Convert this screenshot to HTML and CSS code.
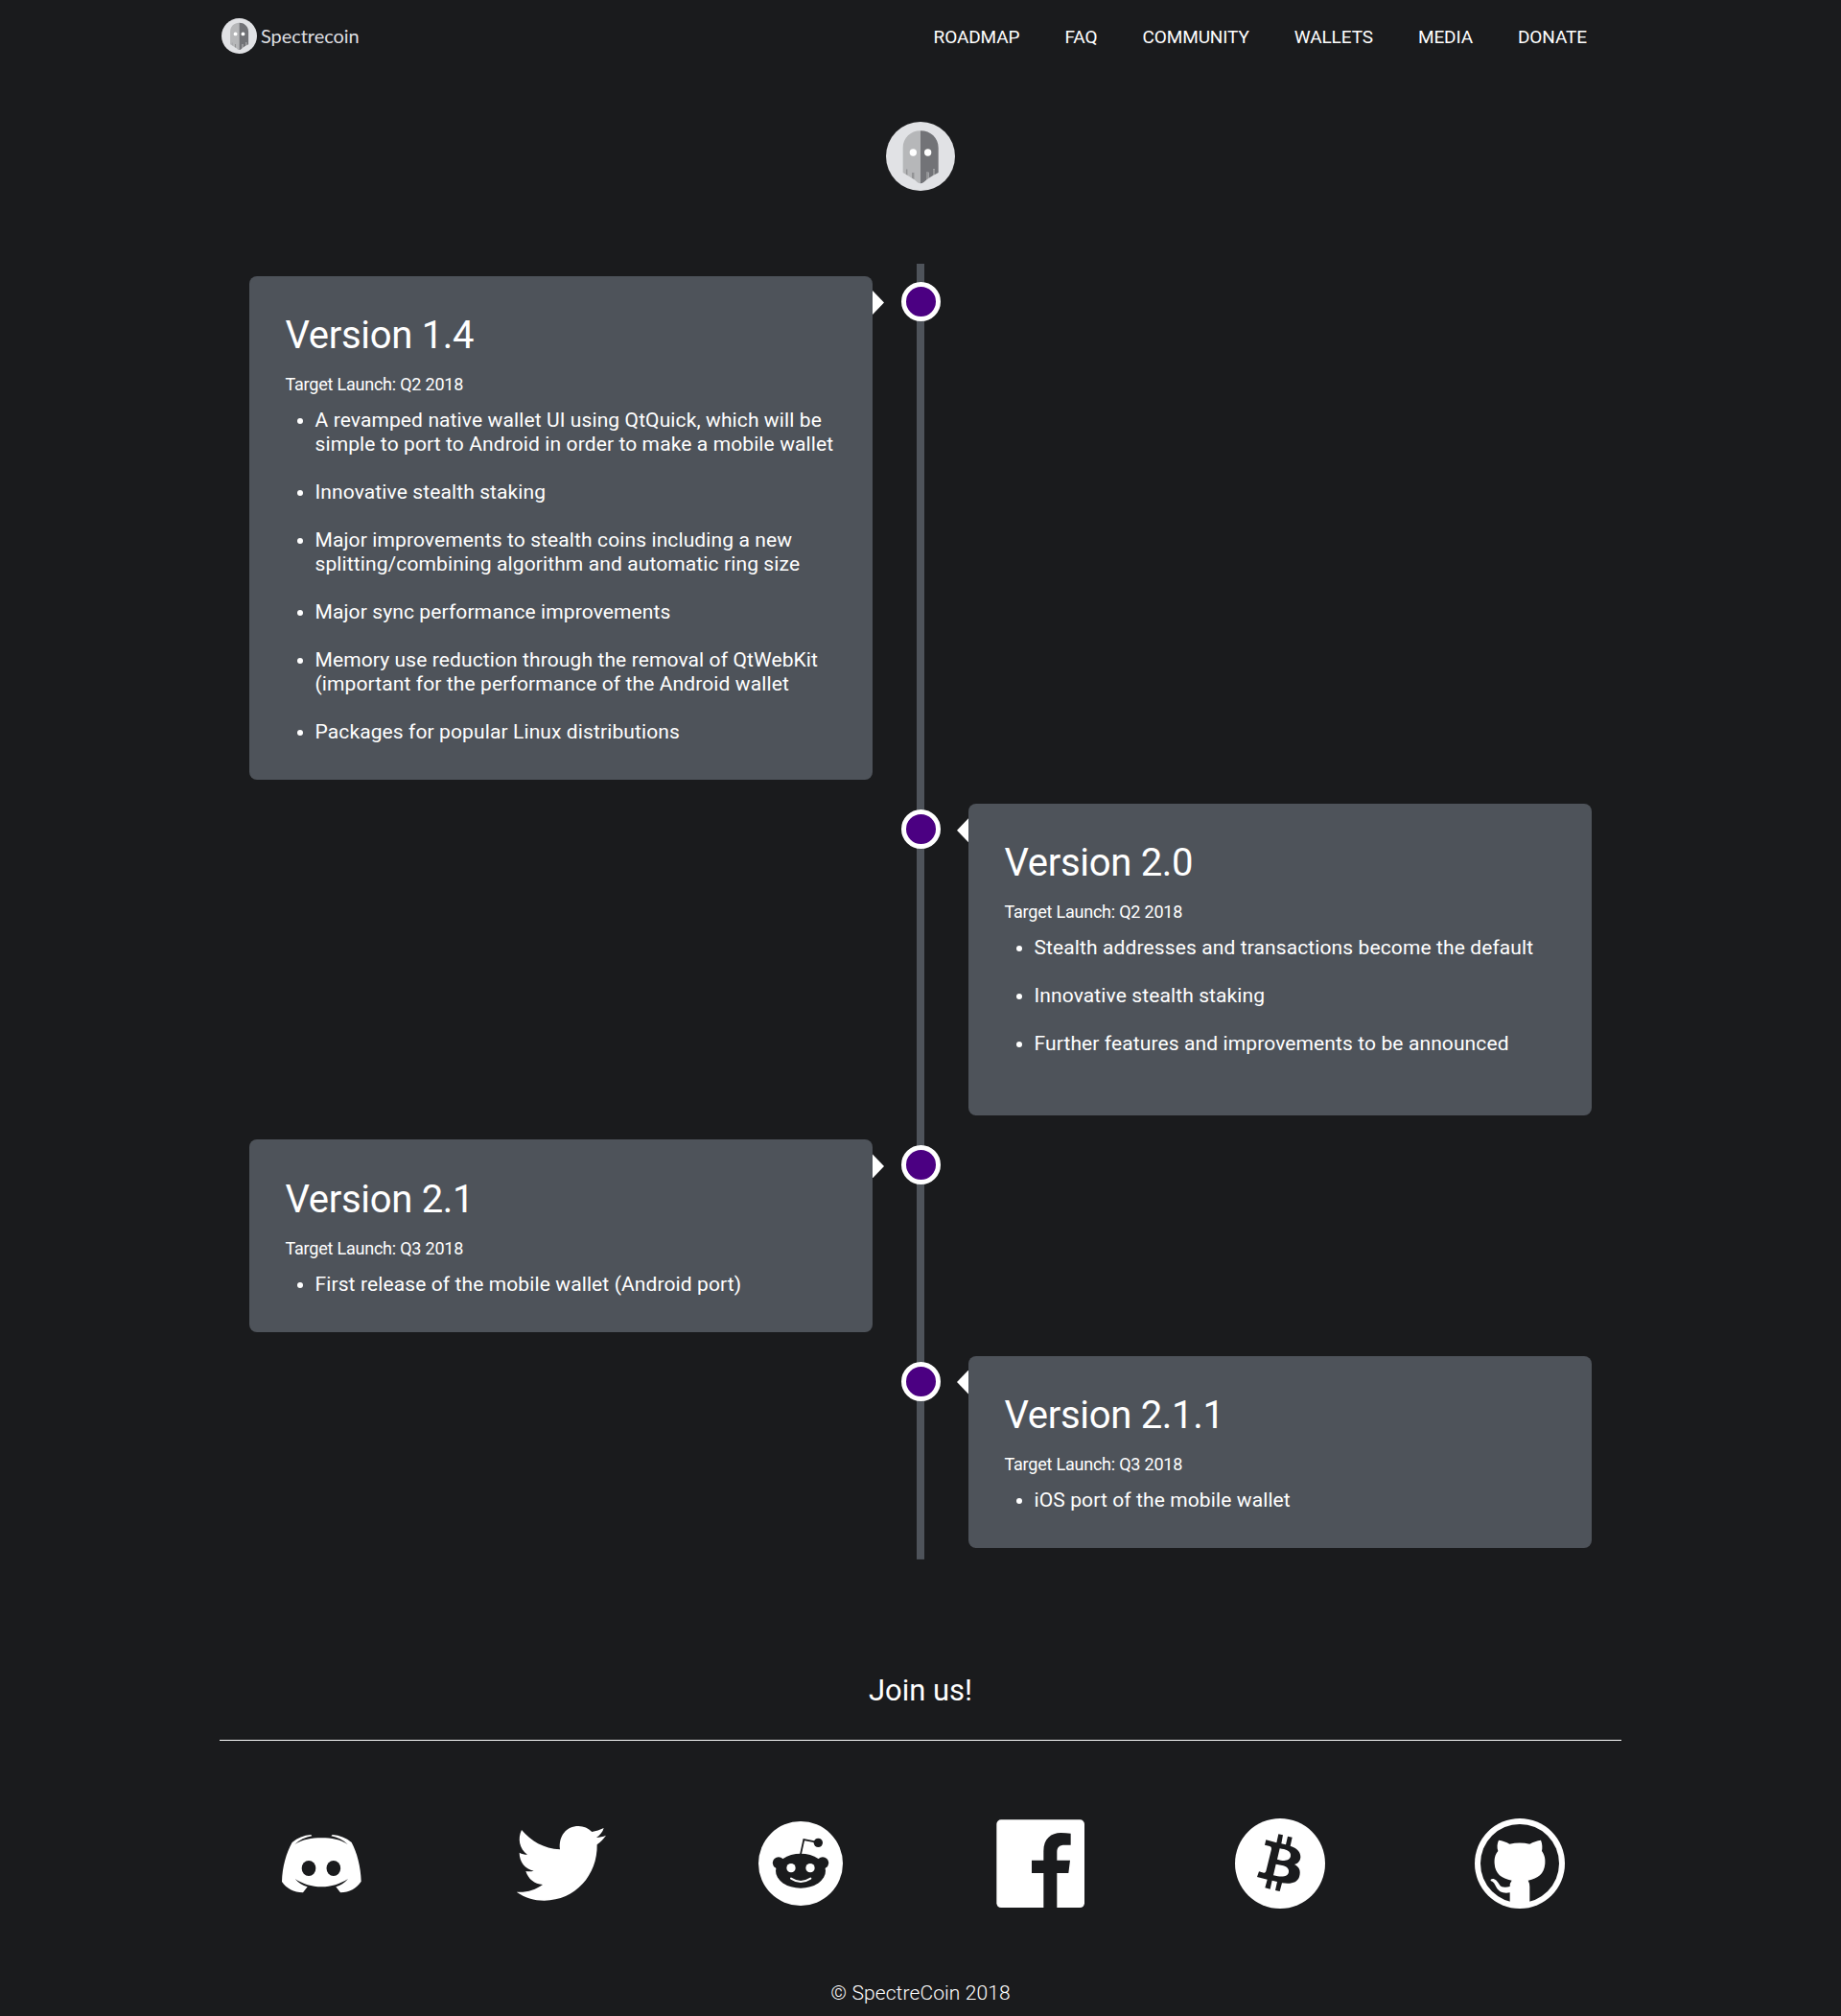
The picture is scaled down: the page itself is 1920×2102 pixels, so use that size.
FILE: index.html
```html
<!DOCTYPE html>
<html lang="en">
<head>
<meta charset="utf-8">
<title>Spectrecoin Roadmap</title>
<link rel="stylesheet" href="styles.css">
</head>
<body>
<svg class="defs" aria-hidden="true">
  <symbol id="ghost" viewBox="72 50 216 216">
    <circle cx="180" cy="158" r="108" fill="#e1e2e5"/>
    <path d="M180 78C149 78 125 101 125 131V209L134 214V198H140V218L153 226V208H161V231L170 239Q175 243 180 243Z" fill="#b6b7b9"/>
    <path d="M180 78C212 78 236 101 236 131V209L225 215V198H219V218L206 226V208H198V232L190 239Q185 243 180 243Z" fill="#727377"/>
    <path d="M134 198h6v20l-6-4zM153 208h8v23l-8-5zM198 208h8v18l-8 6zM219 198h6v17l-6 3z" fill="#939496"/>
    <circle cx="157" cy="146" r="11" fill="#fff"/><circle cx="203" cy="146" r="11" fill="#fff"/>
  </symbol>
</svg>
<header class="header">
  <a class="brand"><svg class="brand-icon"><use href="#ghost"/></svg><span class="brand-name">Spectrecoin</span></a>
  <nav class="nav"><a>ROADMAP</a><a>FAQ</a><a>COMMUNITY</a><a>WALLETS</a><a>MEDIA</a><a>DONATE</a></nav>
</header>
<main>
  <svg class="emblem"><use href="#ghost"/></svg>
  <section class="timeline">
    <article class="card left">
      <h2>Version 1.4</h2>
      <p>Target Launch: Q2 2018</p>
      <ul>
        <li>A revamped native wallet UI using QtQuick, which will be<br>simple to port to Android in order to make a mobile wallet</li>
        <li>Innovative stealth staking</li>
        <li>Major improvements to stealth coins including a new<br>splitting/combining algorithm and automatic ring size</li>
        <li>Major sync performance improvements</li>
        <li>Memory use reduction through the removal of QtWebKit<br>(important for the performance of the Android wallet</li>
        <li>Packages for popular Linux distributions</li>
      </ul>
    </article>
    <article class="card right roomy">
      <h2>Version 2.0</h2>
      <p>Target Launch: Q2 2018</p>
      <ul>
        <li>Stealth addresses and transactions become the default</li>
        <li>Innovative stealth staking</li>
        <li>Further features and improvements to be announced</li>
      </ul>
    </article>
    <article class="card left">
      <h2>Version 2.1</h2>
      <p>Target Launch: Q3 2018</p>
      <ul><li>First release of the mobile wallet (Android port)</li></ul>
    </article>
    <article class="card right">
      <h2>Version 2.1.1</h2>
      <p>Target Launch: Q3 2018</p>
      <ul><li>iOS port of the mobile wallet</li></ul>
    </article>
  </section>
</main>
<footer class="footer">
  <h3>Join us!</h3>
  <div class="social">
    <svg viewBox="54 48 282 282"><path fill="#fff" d="M104 123C121 109 140 101 163 99L166 103C145 107 128 115 112 129C137 114 164 109 196 109C228 109 254 114 278 129C263 115 245 107 226 103L230 99C253 101 273 109 290 123C307 155 319 200 320 245C306 267 283 279 255 280L241 262C256 257 267 250 279 237C253 253 227 262 196 262C165 262 138 253 113 237C125 250 136 257 152 262L138 280C109 279 86 267 72 246C73 200 86 155 104 123Z"/><ellipse cx="156" cy="204" rx="22" ry="24" class="cut"/><ellipse cx="233.500" cy="204" rx="22" ry="24" class="cut"/></svg>
    <svg viewBox="804 48 282 282"><path fill="#fff" d="M822 84C850 118 892 143 942 145C937 103 962 72 1000 72C1016 72 1031 78 1042 90C1055 88 1067 84 1079 78C1076 90 1067 101 1056 108C1066 107 1076 105 1086 101C1078 113 1069 121 1058 130C1060 225 990 305 893 305C861 305 832 296 806 278C838 280 865 272 888 255C862 253 843 238 835 213C844 215 852 214 860 212C833 206 815 184 815 155C823 159 831 161 840 161C815 143 809 111 822 84Z"/></svg>
    <svg viewBox="54 48 282 282"><circle cx="195" cy="189" r="132" fill="#fff"/><g class="cut"><circle cx="126" cy="187" r="18.500"/><circle cx="264" cy="187" r="18.500"/><ellipse cx="195" cy="212" rx="78" ry="54"/><circle cx="250" cy="124" r="14"/></g><path class="cut-line" stroke-width="5.500" d="M195 160L205 114L244 122"/><circle cx="165" cy="203" r="14" fill="#fff"/><circle cx="225" cy="203" r="14" fill="#fff"/><path d="M165 236Q195 256 226 236" stroke="#fff" stroke-width="6" stroke-linecap="round" fill="none"/></svg>
    <svg viewBox="804 48 282 282"><rect x="808" y="52" width="275" height="275" rx="14" fill="#fff"/><path class="cut" d="M955 328V219H918V179H955V150C955 111 979 93 1009 93Q1025 93 1040 95V131H1022C1003 131 997 139 997 154V179H1038L1033 219H997V328Z"/></svg>
    <svg viewBox="54 48 282 282"><circle cx="195" cy="189" r="141" fill="#fff"/><path class="cut" fill-rule="evenodd" d="M151 115L184 124L190 97L204 100L199 127L213 130L219 104L233 107L227 134C248 141 260 153 259 169C258 182 251 189 240 192C255 199 261 213 255 231C248 249 231 254 201 250L194 276L180 273L186 246L170 242L164 269L148 265L155 239L123 231L129 214L144 218Q149 219 151 213L168 144Q169 137 163 135L147 131ZM194 142L186 176C208 183 226 181 228 166C230 149 212 145 194 142ZM182 191L174 226C199 232 219 232 222 216C225 198 204 194 182 191Z"/></svg>
    <svg viewBox="804 48 282 282"><circle cx="945" cy="189" r="141" fill="#fff"/><circle cx="945" cy="189" r="123" class="cut"/><path fill="#fff" d="M879 116C891 117 903 122 913 128Q945 121 976 128C987 122 999 117 1011 116C1016 128 1016 140 1014 150C1024 164 1025 177 1024 190C1021 222 1002 236 971 242Q976 250 976 262V320H914V280C893 284 879 277 872 264C867 254 863 246 854 243C852 236 864 235 872 242C880 250 881 258 889 262Q900 265 914 261Q913 250 920 242C888 237 868 221 866 190C865 174 867 162 877 150C873 139 874 126 879 116Z"/></svg>
  </div>
  <p class="copyright">© SpectreCoin 2018</p>
</footer>
</body>
</html>
```
FILE: styles.css
```css
*, *::before, *::after { box-sizing: border-box; }
body { margin: 0; background: #1a1b1d; color: #fff; font-family: Roboto, sans-serif; font-size: 21px; }
h2, h3, p, ul { margin: 0; font-weight: 400; }
.defs { display: block; width: 0; height: 0; }
.header { width: 1462px; height: 76px; margin: 0 auto; padding: 0 36px 0 2px; display: flex; align-items: center; justify-content: space-between; }
.brand { display: flex; align-items: center; gap: 4px; padding-bottom: 2px; }
.brand-icon { width: 37px; height: 37px; }
.brand-name { font-family: Lato, sans-serif; font-size: 20px; line-height: 26px; letter-spacing: -.05px; color: #dedfe1; }
.nav { display: flex; gap: 47px; padding-top: 1px; font-size: 19px; line-height: 24px; letter-spacing: -.1px; }
.emblem { display: block; width: 72px; height: 72px; margin: 51px auto 76px; }
.timeline { width: 1400px; margin: 0 auto; padding: 13px 0 12px; display: flex; flex-direction: column; gap: 25px; background: linear-gradient(#4e535a, #4e535a) center / 8px 100% no-repeat; }
.card { position: relative; width: 650px; padding: 38.15px 37.5px 37.05px; border-radius: 8px; background: #4e535a; }
.card.right { align-self: flex-end; }
.card h2 { font-size: 40px; line-height: 47px; letter-spacing: -.3px; }
.card p { margin: 17px 0 15px; font-size: 18px; line-height: 21px; letter-spacing: -.22px; }
.card ul { padding-left: 31px; line-height: 25px; letter-spacing: .11px; }
.card li + li { margin-top: 25px; }
.card.roomy ul { padding-bottom: 25px; }
.card::before { content: ""; position: absolute; top: 6px; width: 41px; height: 41px; border: 5px solid #fff; border-radius: 50%; background: #4b0082; }
.card::after { content: ""; position: absolute; top: 15px; width: 12px; height: 25px; background: #fff; }
.left::before { left: 680px; }
.right::before { left: -70px; }
.left::after { left: 650px; clip-path: polygon(0 0, 100% 50%, 0 100%); }
.right::after { left: -12px; clip-path: polygon(100% 0, 0 50%, 100% 100%); }
.footer { display: flex; flex-direction: column; align-items: center; padding-top: 119.2px; }
.footer h3 { width: 1462px; height: 70px; border-bottom: 1px solid #fff; font-size: 31px; line-height: 36px; text-align: center; }
.social { width: 1500px; margin-top: 81px; display: grid; grid-template-columns: repeat(6, 1fr); justify-items: center; }
.social svg { width: 94px; height: 94px; }
.cut { fill: #1a1b1d; }
.cut-line { fill: none; stroke: #1a1b1d; }
.copyright { margin-top: 76px; height: 36px; font-weight: 300; line-height: 25px; letter-spacing: .1px; }
```
